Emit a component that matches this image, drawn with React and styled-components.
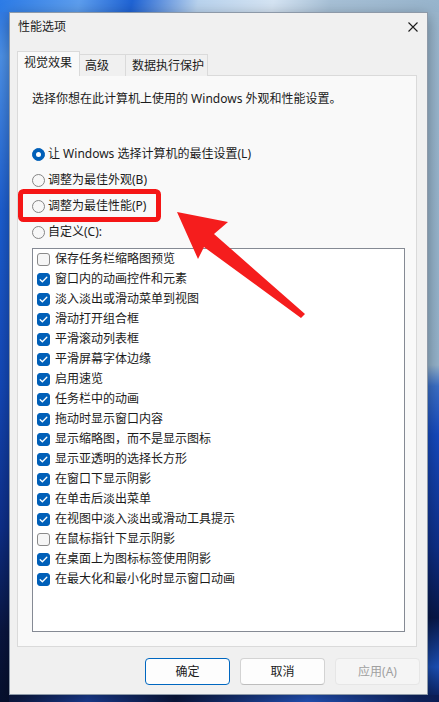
import React from 'react';
import styled, { createGlobalStyle } from 'styled-components';

const GlobalStyle = createGlobalStyle`
  html, body {
    margin: 0;
    padding: 0;
    background: #0b1a4a;
  }
  body {
    font-family: "Noto Sans", "Noto Sans CJK SC", sans-serif;
    color: #1b1b1b;
  }
  * {
    box-sizing: border-box;
  }
`;

// Windows 11 bloom wallpaper peeking around the dialog edges
const Desktop = styled.div`
  position: relative;
  width: 439px;
  height: 702px;
  overflow: hidden;
  padding: 12px 11px 7px 9px;
  background:
    linear-gradient(100deg, #2c7be6 0%, #5d9eee 18%, #1f63d4 30%, #b9d3ee 45%, #d5e4f3 62%, #a7c0d6 75%, #97b4cc 100%) top / 100% 12px no-repeat,
    linear-gradient(180deg, #2a74e2 0%, #4e93ea 8%, #1d5fd2 30%, #1448b8 55%, #0e2f8a 75%, #0a1640 90%, #06102e 100%) left / 9px 100% no-repeat,
    linear-gradient(100deg, #0a1334 0%, #1b3f9a 20%, #0b1840 40%, #2557c4 70%, #0c1d55 100%) bottom / 100% 7px no-repeat,
    linear-gradient(180deg, #9ab6cd 0%, #94b2ca 52%, #3b6fc6 55%, #1549bd 62%, #0e2e86 78%, #081848 88%, #1b4fb4 95%, #0a1a52 100%);
`;

const Window = styled.div`
  width: 419px;
  height: 683px;
  display: flex;
  flex-direction: column;
  background: #f0f0f0;
  border: 1px solid #8d99a8;
  box-shadow: 0 4px 14px rgba(0, 0, 0, 0.35);
`;

const TitleBar = styled.div`
  height: 27px;
  display: flex;
  align-items: center;
  justify-content: space-between;
  padding: 0 9px 0 8px;
  font-size: 12px;
  line-height: 16px;
  flex-shrink: 0;
`;

const CloseGlyph = styled.svg`
  width: 10px;
  height: 10px;
  display: block;
`;

const TabRow = styled.div`
  display: flex;
  align-items: flex-end;
  height: 25px;
  margin: 11px 0 0 7px;
  position: relative;
  z-index: 1;
`;

const Tab = styled.div`
  width: ${p => p.$width}px;
  height: ${p => (p.$active ? '25px' : '22px')};
  padding: 0 0 ${p => (p.$active ? 2 : 0)}px ${p => p.$pad}px;
  display: flex;
  align-items: center;
  font-size: 12px;
  line-height: 16px;
  background: ${p => (p.$active ? '#f9f9f9' : '#f0f0f0')};
  border: 1px solid #dadada;
  border-bottom: none;
  margin-left: ${p => (p.$first ? 0 : -1)}px;
  position: relative;
  z-index: ${p => (p.$active ? 2 : 1)};
`;

const Panel = styled.div`
  height: 572px;
  margin: -1px 10px 0 7px;
  background: #f9f9f9;
  border: 1px solid #dadada;
  padding: 15px 0 0 14px;
  display: flex;
  flex-direction: column;
`;

const Description = styled.div`
  font-size: 12px;
  line-height: 16px;
`;

const RadioGroup = styled.div`
  margin-top: 34px;
  display: flex;
  flex-direction: column;
`;

const RadioRow = styled.label`
  height: 26px;
  display: flex;
  align-items: center;
  gap: 3px;
  font-size: 12px;
  line-height: 16px;
`;

const RadioDot = styled.span`
  width: 13px;
  height: 13px;
  border-radius: 50%;
  flex-shrink: 0;
  background: ${p => (p.$on ? '#005fb8' : '#f7f7f7')};
  border: 1px solid ${p => (p.$on ? '#005fb8' : '#858585')};
  display: flex;
  align-items: center;
  justify-content: center;

  &::after {
    content: '';
    display: ${p => (p.$on ? 'block' : 'none')};
    width: 5px;
    height: 5px;
    border-radius: 50%;
    background: #ffffff;
  }
`;

const ListBox = styled.div`
  width: 373px;
  height: 384px;
  margin-top: 3px;
  background: #ffffff;
  border: 1px solid #858a94;
  padding: 0 0 0 4px;
`;

const CheckRow = styled.div`
  height: 20px;
  display: flex;
  align-items: center;
  gap: 5px;
  font-size: 12px;
  line-height: 16px;
`;

const CheckBox = styled.span`
  width: 13px;
  height: 13px;
  border-radius: 3px;
  flex-shrink: 0;
  background: ${p => (p.$on ? '#005fb8' : '#f6f6f6')};
  border: 1px solid ${p => (p.$on ? '#005fb8' : '#8a8a8a')};
  display: flex;
  align-items: center;
  justify-content: center;

  svg {
    display: block;
  }
`;

const ButtonBar = styled.div`
  display: flex;
  justify-content: flex-end;
  gap: 10px;
  margin-top: 11px;
  padding-right: 7px;
`;

const Button = styled.div`
  width: 85px;
  height: 27px;
  border-radius: 4px;
  display: flex;
  align-items: center;
  justify-content: center;
  font-size: 12px;
  line-height: 16px;
  background: ${p => (p.$disabled ? '#f5f5f5' : '#fdfdfd')};
  color: ${p => (p.$disabled ? '#a0a0a0' : '#1b1b1b')};
  border: 1px solid ${p => (p.$primary ? '#0067c0' : p.$disabled ? '#e6e6e6' : '#d3d3d3')};
  border-bottom-color: ${p => (p.$primary ? '#0067c0' : p.$disabled ? '#e6e6e6' : '#bdbdbd')};
`;

// red callout drawn over the dialog
const Callout = styled.svg`
  position: absolute;
  left: 0;
  top: 0;
  width: 439px;
  height: 702px;
  pointer-events: none;
`;

const effects = [
  ['保存任务栏缩略图预览', false],
  ['窗口内的动画控件和元素', true],
  ['淡入淡出或滑动菜单到视图', true],
  ['滑动打开组合框', true],
  ['平滑滚动列表框', true],
  ['平滑屏幕字体边缘', true],
  ['启用速览', true],
  ['任务栏中的动画', true],
  ['拖动时显示窗口内容', true],
  ['显示缩略图，而不是显示图标', true],
  ['显示亚透明的选择长方形', true],
  ['在窗口下显示阴影', true],
  ['在单击后淡出菜单', true],
  ['在视图中淡入淡出或滑动工具提示', true],
  ['在鼠标指针下显示阴影', false],
  ['在桌面上为图标标签使用阴影', true],
  ['在最大化和最小化时显示窗口动画', true],
];

const options = [
  ['让 Windows 选择计算机的最佳设置(L)', true],
  ['调整为最佳外观(B)', false],
  ['调整为最佳性能(P)', false],
  ['自定义(C):', false],
];

const Check = () => (
  <svg width="9" height="9" viewBox="0 0 9 9">
    <path d="M1.2 4.7 L3.4 6.8 L7.8 2.2" fill="none" stroke="#fff" strokeWidth="1.3" strokeLinecap="round" strokeLinejoin="round" />
  </svg>
);

export default function App() {
  return (
    <>
      <GlobalStyle />
      <Desktop>
        <Window>
          <TitleBar>
            <span>性能选项</span>
            <CloseGlyph viewBox="0 0 10 10">
              <path d="M0.5 0.5 L9.5 9.5 M9.5 0.5 L0.5 9.5" stroke="#1b1b1b" strokeWidth="1.1" />
            </CloseGlyph>
          </TitleBar>

          <TabRow>
            <Tab $active $first $width={63} $pad={6}>视觉效果</Tab>
            <Tab $width={47} $pad={5}>高级</Tab>
            <Tab $width={83} $pad={6}>数据执行保护</Tab>
          </TabRow>

          <Panel>
            <Description>选择你想在此计算机上使用的 Windows 外观和性能设置。</Description>

            <RadioGroup>
              {options.map(([label, on]) => (
                <RadioRow key={label}>
                  <RadioDot $on={on} />
                  {label}
                </RadioRow>
              ))}
            </RadioGroup>

            <ListBox>
              {effects.map(([label, on]) => (
                <CheckRow key={label}>
                  <CheckBox $on={on}>{on && <Check />}</CheckBox>
                  {label}
                </CheckRow>
              ))}
            </ListBox>
          </Panel>

          <ButtonBar>
            <Button $primary>确定</Button>
            <Button>取消</Button>
            <Button $disabled>应用(A)</Button>
          </ButtonBar>
        </Window>

        <Callout viewBox="0 0 439 702">
          <rect x="20.5" y="191.5" width="138" height="28" rx="3" fill="none" stroke="#f51616" strokeWidth="5" />
          <polygon
            points="177,212 228,222 214,234 305,314 301,318 204,247 198,259"
            fill="#f51d1d"
          />
        </Callout>
      </Desktop>
    </>
  );
}
